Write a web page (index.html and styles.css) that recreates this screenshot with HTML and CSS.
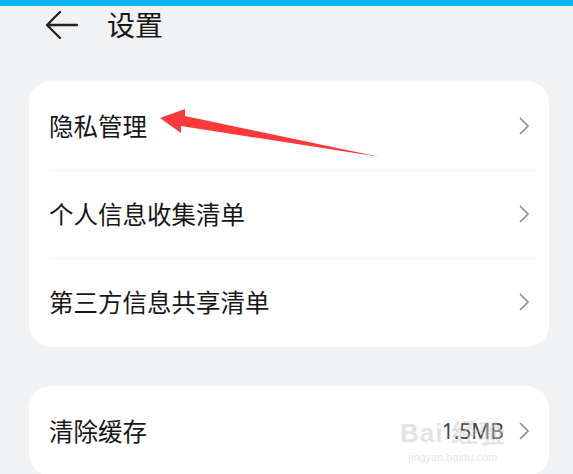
FILE: index.html
```html
<!DOCTYPE html>
<html lang="zh">
<head>
<meta charset="utf-8">
<link rel="stylesheet" href="styles.css">
</head>
<body>
<div class="statusbar"></div>
<header class="topbar">
  <svg class="back" width="34" height="30" viewBox="0 0 34 30"><path d="M15 3 L2 16 L15 29 M2 16 H32" fill="none" stroke="#222" stroke-width="2.3" stroke-linecap="round" stroke-linejoin="round"/></svg>
  <h1 class="title">设置</h1>
</header>
<main class="content">
  <section class="card">
    <div class="row"><span class="label">隐私管理</span><svg class="chev" width="12" height="20" viewBox="0 0 12 20"><path d="M2 2 L10 10 L2 18" fill="none" stroke="#8a8a8a" stroke-width="1.6"/></svg></div>
    <div class="row"><span class="label">个人信息收集清单</span><svg class="chev" width="12" height="20" viewBox="0 0 12 20"><path d="M2 2 L10 10 L2 18" fill="none" stroke="#8a8a8a" stroke-width="1.6"/></svg></div>
    <div class="row"><span class="label">第三方信息共享清单</span><svg class="chev" width="12" height="20" viewBox="0 0 12 20"><path d="M2 2 L10 10 L2 18" fill="none" stroke="#8a8a8a" stroke-width="1.6"/></svg></div>
  </section>
  <section class="card">
    <div class="row"><span class="label">清除缓存</span><span class="value">1.5MB</span><svg class="chev" width="12" height="20" viewBox="0 0 12 20"><path d="M2 2 L10 10 L2 18" fill="none" stroke="#8a8a8a" stroke-width="1.6"/></svg></div>
  </section>
</main>
<svg class="annot" width="573" height="474" viewBox="0 0 573 474"><polygon points="160,118 185,109 185,116 380,157 181,126 181,133" fill="#fd3a3a"/></svg>
<div class="watermark"><span class="wm-big">Bai 经验</span><span class="wm-small">jingyan.baidu.com</span></div>
</body>
</html>
```
FILE: styles.css
```css
html, body {
  margin: 0;
  padding: 0;
}
body {
  width: 573px;
  height: 474px;
  overflow: hidden;
  background: #f1f2f4;
  font-family: "Noto Sans CJK SC", "Noto Sans", sans-serif;
  color: #161616;
  position: relative;
}
.statusbar {
  height: 6px;
  background: #12b6f4;
}
.topbar {
  display: flex;
  align-items: center;
  height: 38px;
  padding-left: 45px;
}
.back {
  display: block;
  margin-top: -2px;
}
.title {
  margin: -2px 0 0 28px;
  font-size: 28px;
  font-weight: 400;
  line-height: 38px;
}
.content {
  display: flex;
  flex-direction: column;
  gap: 39px;
  padding: 37px 24px 0 29px;
}
.card {
  background: #fff;
  border-radius: 22px;
  padding: 1px 0;
}
.row {
  display: flex;
  align-items: center;
  height: 88px;
  padding: 0 19px 0 20px;
  position: relative;
}
.row + .row::before {
  content: "";
  position: absolute;
  top: 0;
  left: 20px;
  right: 12px;
  height: 1px;
  background: #efeff1;
}
.label {
  flex: 1;
  font-size: 24.5px;
  line-height: 30px;
}
.value {
  font-size: 21px;
  color: #444;
  margin-right: 14px;
  font-family: "Noto Sans", sans-serif;
}
.chev {
  display: block;
}
.annot {
  position: absolute;
  left: 0;
  top: 0;
  pointer-events: none;
}
.watermark {
  position: absolute;
  left: 400px;
  top: 418px;
  display: flex;
  flex-direction: column;
  align-items: center;
  color: rgba(200, 200, 200, 0.5);
  font-family: "Liberation Sans", sans-serif;
  pointer-events: none;
}
.wm-big {
  font-size: 26px;
  line-height: 30px;
  font-weight: 700;
  letter-spacing: 1px;
}
.wm-small {
  font-size: 11px;
  line-height: 14px;
  margin-top: 2px;
}
```
